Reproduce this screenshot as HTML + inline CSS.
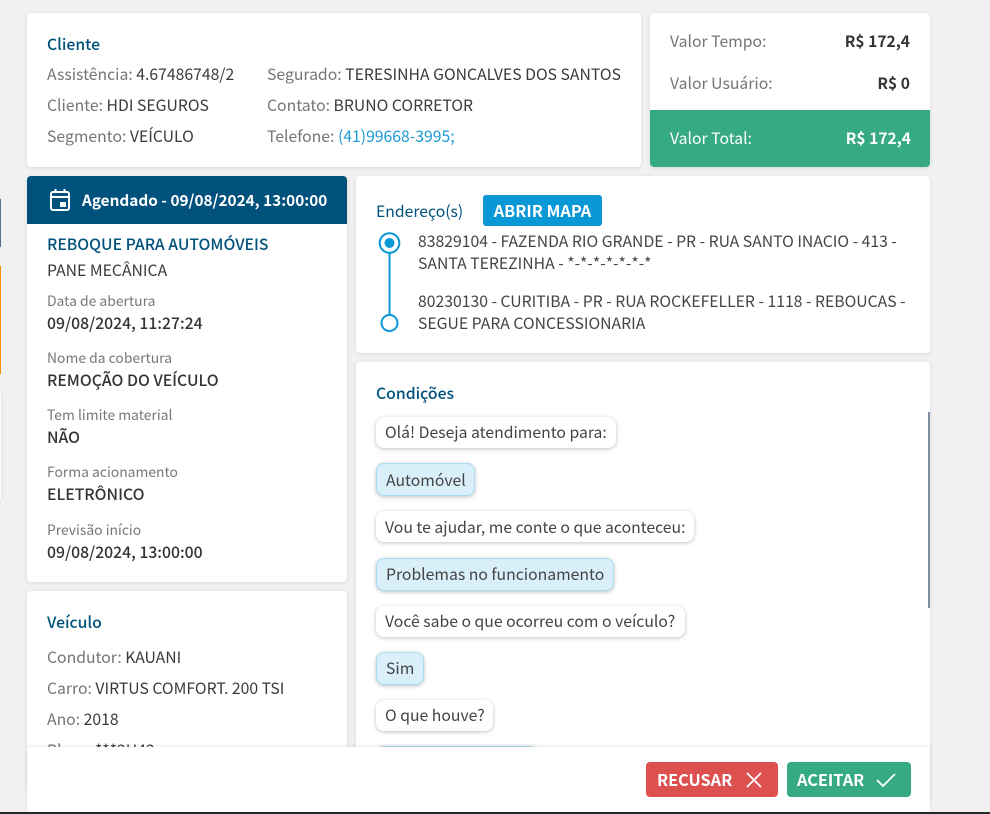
<!DOCTYPE html>
<html lang="pt-BR"><head><meta charset="utf-8"><title>Serviço</title>
<style>
html,body{margin:0;padding:0}
body{width:990px;height:814px;position:relative;overflow:hidden;background:#f1f1f1;font-family:"Noto Sans CJK SC","Liberation Sans",sans-serif;font-size:15.75px;color:#3a3a3a}
.c{position:absolute;background:#fff;border-radius:4px;box-shadow:0 1px 4px rgba(0,0,0,.1)}
.t{position:absolute;white-space:nowrap;line-height:20px;height:20px}
.g{color:#757575}
.h{color:#00527c;font-weight:500}
.b{font-weight:500;color:#333}
.s{font-size:13.900px;color:#777}
.a{font-size:15.750px;color:#444}
.v{font-size:15.600px;font-weight:700;color:#333}
.bub{position:absolute;height:31px;line-height:29px;box-sizing:border-box;background:#fff;border-radius:8px;box-shadow:0 1px 4px rgba(0,0,0,.25);padding-left:9px;white-space:nowrap;font-size:15.750px;color:#444}
.ans{background:#d9eff9;border:1px solid #aadcf1;height:33px;padding-left:9px;line-height:29px}
.btn{position:absolute;top:762px;height:35px;border-radius:4px;color:#fff;font-weight:700;font-size:16.300px;line-height:34px}
</style></head>
<body>
<div style="position:absolute;left:0;top:199px;width:1px;height:48px;background:#5a6d92"></div>
<div style="position:absolute;left:0;top:266px;width:1px;height:108px;background:#f79009"></div>
<div class="c" style="left:-6px;top:392px;width:7px;height:108px;border-radius:2px"></div>

<div class="c" style="left:27px;top:13px;width:614px;height:154px"></div>
<div class="t h" style="left:47px;top:34px">Cliente</div>
<div class="t" style="left:47px;top:64px"><span class="g">Assistência:</span> 4.67486748/2</div>
<div class="t" style="left:47px;top:95px"><span class="g">Cliente:</span> HDI SEGUROS</div>
<div class="t" style="left:47px;top:126px"><span class="g">Segmento:</span> VEÍCULO</div>
<div class="t" style="left:267px;top:64px"><span class="g">Segurado:</span> TERESINHA GONCALVES DOS SANTOS</div>
<div class="t" style="left:267px;top:95px"><span class="g">Contato:</span> BRUNO CORRETOR</div>
<div class="t" style="left:267px;top:126px"><span class="g">Telefone:</span> <span style="color:#1a9ad6">(41)99668-3995;</span></div>

<div class="c" style="left:650px;top:13px;width:280px;height:154px;overflow:hidden">
<div style="position:absolute;left:0;top:97px;width:280px;height:57px;background:#36aa80"></div>
</div>
<div class="t g" style="left:670px;top:31px">Valor Tempo:</div>
<div class="t v" style="right:80px;top:31px">R$ 172,4</div>
<div class="t g" style="left:670px;top:73px">Valor Usuário:</div>
<div class="t v" style="right:80px;top:73px">R$ 0</div>
<div class="t" style="left:670px;top:128px;color:#fff">Valor Total:</div>
<div class="t v" style="right:79px;top:128px;color:#fff">R$ 172,4</div>

<div class="c" style="left:27px;top:176px;width:320px;height:406px;overflow:hidden">
<div style="height:48px;background:#00527c"></div>
</div>
<svg style="position:absolute;left:49px;top:188px" width="22" height="24" viewBox="0 0 22 24" fill="none">
<rect x="2" y="4" width="18" height="18" rx="2" stroke="#fff" stroke-width="2"/>
<path d="M2 9H20" stroke="#fff" stroke-width="2"/>
<path d="M6.500 1V5M15.500 1V5" stroke="#fff" stroke-width="2"/>
<rect x="11" y="14" width="6" height="5" fill="#fff"/>
</svg>
<div class="t" style="left:82px;top:190px;color:#fff;font-weight:700;font-size:15.330px">Agendado - 09/08/2024, 13:00:00</div>
<div class="t h" style="left:47px;top:234px">REBOQUE PARA AUTOMÓVEIS</div>
<div class="t" style="left:47px;top:260px">PANE MECÂNICA</div>
<div class="t s" style="left:47px;top:291px">Data de abertura</div>
<div class="t b" style="left:47px;top:313px">09/08/2024, 11:27:24</div>
<div class="t s" style="left:47px;top:348px">Nome da cobertura</div>
<div class="t b" style="left:47px;top:370px">REMOÇÃO DO VEÍCULO</div>
<div class="t s" style="left:47px;top:405px">Tem limite material</div>
<div class="t b" style="left:47px;top:427px">NÃO</div>
<div class="t s" style="left:47px;top:462px">Forma acionamento</div>
<div class="t b" style="left:47px;top:484px">ELETRÔNICO</div>
<div class="t s" style="left:47px;top:520px">Previsão início</div>
<div class="t b" style="left:47px;top:542px">09/08/2024, 13:00:00</div>

<div class="c" style="left:27px;top:591px;width:320px;height:200px"></div>
<div class="t h" style="left:47px;top:612px">Veículo</div>
<div class="t" style="left:47px;top:647px"><span class="g">Condutor:</span> KAUANI</div>
<div class="t" style="left:47px;top:678px"><span class="g">Carro:</span> VIRTUS COMFORT. 200 TSI</div>
<div class="t" style="left:47px;top:709px"><span class="g">Ano:</span> 2018</div>
<div class="t" style="left:47px;top:740px"><span class="g">Placa:</span> ***2H42</div>

<div class="c" style="left:356px;top:176px;width:574px;height:177px"></div>
<div class="t h" style="left:376px;top:201px;font-weight:400">Endereço(s)</div>
<div style="position:absolute;left:483px;top:195px;width:119px;height:31px;border-radius:3px;background:#0a97d6;color:#fff;font-weight:700;font-size:16.300px;line-height:30px;text-align:center">ABRIR MAPA</div>
<svg style="position:absolute;left:376px;top:230px" width="28" height="104" viewBox="0 0 28 104" fill="none">
<path d="M13.500 22V85" stroke="#0a97d6" stroke-width="2"/>
<circle cx="13.500" cy="13" r="9.800" stroke="#0a97d6" stroke-width="2" fill="#fff"/>
<circle cx="13.500" cy="13" r="5" fill="#0a97d6"/>
<circle cx="13.500" cy="93" r="8" stroke="#0a97d6" stroke-width="2" fill="#fff"/>
</svg>
<div class="t a" style="left:418px;top:231px">83829104 - FAZENDA RIO GRANDE - PR - RUA SANTO INACIO - 413 -</div>
<div class="t a" style="left:418px;top:253px">SANTA TEREZINHA - *-*-*-*-*-*-*</div>
<div class="t a" style="left:418px;top:291px">80230130 - CURITIBA - PR - RUA ROCKEFELLER - 1118 - REBOUCAS -</div>
<div class="t a" style="left:418px;top:313px">SEGUE PARA CONCESSIONARIA</div>

<div class="c" style="left:356px;top:362px;width:574px;height:440px"></div>
<div class="t h" style="left:376px;top:383px">Condições</div>
<div class="bub" style="left:376px;top:417px;width:240px">Olá! Deseja atendimento para:</div>
<div class="bub ans" style="left:376px;top:463px;width:99px;line-height:32px">Automóvel</div>
<div class="bub" style="left:376px;top:511px;width:318px;line-height:31px">Vou te ajudar, me conte o que aconteceu:</div>
<div class="bub ans" style="left:376px;top:558px;width:238px">Problemas no funcionamento</div>
<div class="bub" style="left:376px;top:606px;width:309px">Você sabe o que ocorreu com o veículo?</div>
<div class="bub ans" style="left:376px;top:652px;width:48px">Sim</div>
<div class="bub" style="left:376px;top:700px;width:117px">O que houve?</div>
<div class="bub ans" style="left:376px;top:746px;width:162px"></div>
<div style="position:absolute;left:928px;top:412px;width:2px;height:196px;background:#7e8da0"></div>

<div style="position:absolute;left:27px;top:747px;width:903px;height:65px;background:#fff;box-shadow:0 -1px 3px rgba(0,0,0,.09);border-radius:0 0 4px 4px"></div>
<div class="btn" style="left:646px;width:132px;background:#dc5050"><span style="position:absolute;left:11px">RECUSAR</span>
<svg style="position:absolute;left:99px;top:9px" width="18" height="18" viewBox="0 0 18 18" fill="none"><path d="M2 2L16 16M16 2L2 16" stroke="#fff" stroke-width="1.800"/></svg></div>
<div class="btn" style="left:787px;width:124px;background:#36aa80"><span style="position:absolute;left:10px">ACEITAR</span>
<svg style="position:absolute;left:88px;top:9px" width="22" height="18" viewBox="0 0 22 18" fill="none"><path d="M2 9L8 15L20 3" stroke="#fff" stroke-width="1.800"/></svg></div>

<div style="position:absolute;left:0;top:812px;width:990px;height:2px;background:#25292b"></div>
</body></html>
